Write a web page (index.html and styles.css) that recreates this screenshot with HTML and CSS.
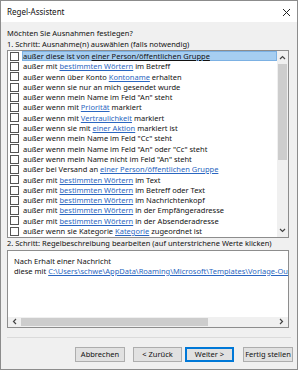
FILE: index.html
```html
<!DOCTYPE html>
<html lang="de">
<head>
    <meta charset="UTF-8">
    <title>Regel-Assistent</title>
    <link rel="stylesheet" href="styles.css">
</head>
<body>
    <div class="dialog">
        <div class="titlebar">
            <span class="title">Regel-Assistent</span>
            <svg class="close" width="9" height="9" viewBox="0 0 9 9"><path d="M1 1L8 8M8 1L1 8" stroke="#222" stroke-width="1"/></svg>
        </div>

        <div class="content">
            <div class="question">Möchten Sie Ausnahmen festlegen?</div>
            <div class="step">1. Schritt: Ausnahme(n) auswählen (falls notwendig)</div>

            <div class="listbox">
                <div class="rows">
                    <div class="row selected"><span class="check"></span><span class="label">außer diese ist von <span class="val">einer Person/öffentlichen Gruppe</span></span></div>
                    <div class="row"><span class="check"></span><span class="label">außer mit <span class="val">bestimmten Wörtern</span> im Betreff</span></div>
                    <div class="row"><span class="check"></span><span class="label">außer wenn über Konto <span class="val">Kontoname</span> erhalten</span></div>
                    <div class="row"><span class="check"></span><span class="label">außer wenn sie nur an mich gesendet wurde</span></div>
                    <div class="row"><span class="check"></span><span class="label">außer wenn mein Name im Feld "An" steht</span></div>
                    <div class="row"><span class="check"></span><span class="label">außer wenn mit <span class="val">Priorität</span> markiert</span></div>
                    <div class="row"><span class="check"></span><span class="label">außer wenn mit <span class="val">Vertraulichkeit</span> markiert</span></div>
                    <div class="row"><span class="check"></span><span class="label">außer wenn sie mit <span class="val">einer Aktion</span> markiert ist</span></div>
                    <div class="row"><span class="check"></span><span class="label">außer wenn mein Name im Feld "Cc" steht</span></div>
                    <div class="row"><span class="check"></span><span class="label">außer wenn mein Name im Feld "An" oder "Cc" steht</span></div>
                    <div class="row"><span class="check"></span><span class="label">außer wenn mein Name nicht im Feld "An" steht</span></div>
                    <div class="row"><span class="check"></span><span class="label">außer bei Versand an <span class="val">einer Person/öffentlichen Gruppe</span></span></div>
                    <div class="row"><span class="check"></span><span class="label">außer mit <span class="val">bestimmten Wörtern</span> im Text</span></div>
                    <div class="row"><span class="check"></span><span class="label">außer mit <span class="val">bestimmten Wörtern</span> im Betreff oder Text</span></div>
                    <div class="row"><span class="check"></span><span class="label">außer mit <span class="val">bestimmten Wörtern</span> im Nachrichtenkopf</span></div>
                    <div class="row"><span class="check"></span><span class="label">außer mit <span class="val">bestimmten Wörtern</span> in der Empfängeradresse</span></div>
                    <div class="row"><span class="check"></span><span class="label">außer mit <span class="val">bestimmten Wörtern</span> in der Absenderadresse</span></div>
                    <div class="row"><span class="check"></span><span class="label">außer wenn sie Kategorie <span class="val">Kategorie</span> zugeordnet ist</span></div>
                </div>
                <div class="vscroll">
                    <div class="arrow"><svg width="7" height="5" viewBox="0 0 7 5"><path d="M1 4L3.5 1.5L6 4" fill="none" stroke="#444" stroke-width="1.2"/></svg></div>
                    <div class="vthumb"></div>
                    <div class="track"></div>
                    <div class="arrow"><svg width="7" height="5" viewBox="0 0 7 5"><path d="M1 1L3.5 3.5L6 1" fill="none" stroke="#444" stroke-width="1.2"/></svg></div>
                </div>
            </div>

            <div class="step step2">2. Schritt: Regelbeschreibung bearbeiten (auf unterstrichene Werte klicken)</div>

            <div class="descbox">
                <div class="desc">
                    <div>Nach Erhalt einer Nachricht</div>
                    <div>diese mit <span class="val">C:\Users\schwe\AppData\Roaming\Microsoft\Templates\Vorlage-Out</span></div>
                </div>
                <div class="hscroll">
                    <div class="harrow"><svg width="5" height="7" viewBox="0 0 5 7"><path d="M4 1L1.5 3.5L4 6" fill="none" stroke="#444" stroke-width="1.2"/></svg></div>
                    <div class="hthumb"></div>
                    <div class="htrack"></div>
                    <div class="harrow"><svg width="5" height="7" viewBox="0 0 5 7"><path d="M1 1L3.5 3.5L1 6" fill="none" stroke="#444" stroke-width="1.2"/></svg></div>
                </div>
            </div>
        </div>

        <div class="separator"></div>

        <div class="buttons">
            <button class="btn cancel">Abbrechen</button>
            <button class="btn back">&lt; Zurück</button>
            <button class="btn default">Weiter &gt;</button>
            <button class="btn finish">Fertig stellen</button>
        </div>
    </div>
</body>
</html>
```

FILE: styles.css
```css
/* Outlook rules wizard dialog */
body {
    margin: 0;
    background: #ffffff;
    font-family: "Noto Sans", sans-serif;
    font-size: 7.5px;
    color: #111111;
}
.dialog {
    width: 296px;
    height: 368px;
    border: 1px solid #8c8c8c;
    background: #f0f0f0;
    display: flex;
    flex-direction: column;
}
.titlebar {
    height: 21px;
    flex-shrink: 0;
    background: #ffffff;
    display: flex;
    align-items: center;
    justify-content: space-between;
    padding: 0 6px 0 6px;
}
.title {
    font-size: 8px;
    color: #111;
}
.close {
    margin-top: 1px;
}
.content {
    flex-shrink: 0;
    padding: 0 8px 0 6px;
    display: flex;
    flex-direction: column;
}
.question {
    margin-top: 6px;
    line-height: 11px;
}
.step {
    line-height: 11px;
}
.listbox {
    height: 185.5px;
    flex-shrink: 0;
    border: 1px solid #8d8d8d;
    background: #ffffff;
    display: flex;
    overflow: hidden;
}
.rows {
    flex: 1;
}
.row {
    height: 10.3px;
    display: flex;
    align-items: center;
}
.check {
    width: 7px;
    height: 7px;
    border: 1px solid #555;
    background: #fff;
    margin: 0 3px 0 2px;
    flex-shrink: 0;
}
.label {
    flex: 1;
    height: 10.3px;
    line-height: 10.3px;
    white-space: nowrap;
    padding-left: 1px;
}
.row.selected .label {
    background: #a6cef1;
    box-shadow: inset 0 0 0 1px #7cb1e3;
}
.val {
    color: #2a66c0;
    text-decoration: underline;
}
.row.selected .val {
    color: #111111;
}
.vscroll {
    width: 11px;
    background: #f0f0f0;
    display: flex;
    flex-direction: column;
}
.arrow {
    height: 13px;
    display: flex;
    align-items: center;
    justify-content: center;
}
.vthumb {
    height: 96px;
    margin: 0 1px;
    background: #cdcdcd;
}
.track {
    flex: 1;
}
.descbox {
    margin-top: 1px;
    height: 76px;
    flex-shrink: 0;
    border: 1px solid #8d8d8d;
    background: #ffffff;
    display: flex;
    flex-direction: column;
    overflow: hidden;
}
.desc {
    flex: 1;
    padding: 5px 0 0 6px;
    line-height: 10.3px;
    white-space: nowrap;
    overflow: hidden;
}
.hscroll {
    height: 10px;
    flex-shrink: 0;
    background: #f0f0f0;
    display: flex;
}
.harrow {
    width: 13px;
    display: flex;
    align-items: center;
    justify-content: center;
}
.hthumb {
    width: 187px;
    margin: 1px 0;
    background: #cdcdcd;
}
.htrack {
    flex: 1;
}
.separator {
    margin: 9px 6px 0 6px;
    border-top: 1px solid #dadada;
}
.buttons {
    display: flex;
    justify-content: flex-end;
    padding: 9px 4px 0 0;
}
.btn {
    width: 50px;
    height: 15px;
    padding: 0;
    font-family: "Noto Sans", sans-serif;
    font-size: 7.5px;
    color: #111111;
    background: #e1e1e1;
    border: 1px solid #adadad;
}
.btn.back {
    width: 49px;
    margin: 0 3px 0 8px;
}
.btn.default {
    width: 49px;
    margin-right: 9px;
    border: 1px solid #0078d7;
    box-shadow: inset 0 0 0 1px #0078d7;
}
```
